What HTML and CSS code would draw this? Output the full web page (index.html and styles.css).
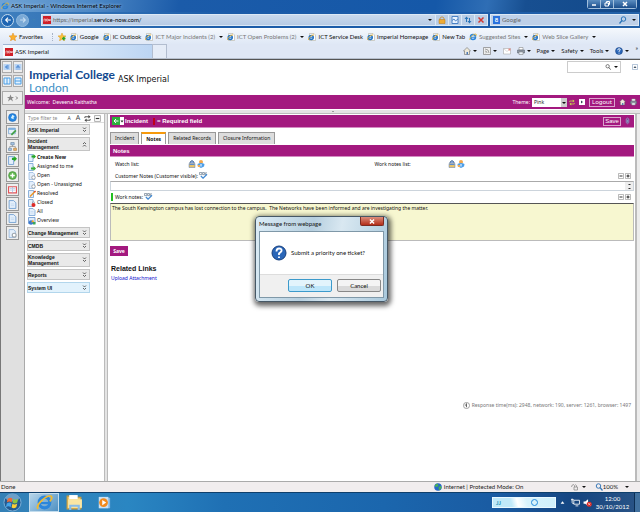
FILE: index.html
```html
<!DOCTYPE html>
<html lang="en">
<head>
<meta charset="utf-8">
<title>ASK Imperial</title>
<link rel="stylesheet" href="styles.css">
</head>
<body>
<svg class="sprite" aria-hidden="true">
  <symbol id="ie" viewBox="0 0 16 16"><circle cx="8" cy="8" r="5" fill="none" stroke="#2b86dc" stroke-width="3"/><path d="M4 8.5h9" stroke="#2b86dc" stroke-width="2"/><path d="M2 14C-1 11 9 1 14 2c2 1 0 4-1 5" fill="none" stroke="#f2b92c" stroke-width="1.6"/></symbol>
  <symbol id="iepage" viewBox="0 0 16 16"><path d="M3 1h9l3 3v11H3z" fill="#fff" stroke="#a9a590"/><circle cx="6.500" cy="9" r="4" fill="none" stroke="#2474c4" stroke-width="3"/><path d="M3 9.500h7" stroke="#2474c4" stroke-width="2"/><path d="M1 14C0 10 8 3 12 4" fill="none" stroke="#eeb02c" stroke-width="2"/></symbol>
  <symbol id="star" viewBox="0 0 16 16"><path d="M8 0l2.300 5.400 5.700.5-4.300 3.900 1.300 5.900L8 12.600 3 15.700l1.300-5.900L0 5.900l5.700-.5z" fill="#fbb02e" stroke="#dd8b1c"/></symbol>
  <symbol id="addstar" viewBox="0 0 16 16"><path d="M8 0l2.300 5.400 5.700.5-4.300 3.900 1.300 5.900L8 12.600 3 15.700l1.300-5.900L0 5.900l5.700-.5z" fill="#fbc03e" stroke="#dd9b1c"/><path d="M8 11h7M11.500 7.500v7" stroke="#2fa52d" stroke-width="3"/></symbol>
  <symbol id="now" viewBox="0 0 16 16"><path d="M0 0h16v16H0z" fill="#cf1f27"/><path d="M2 11V6h3v5M7 6h3v4H7zM11 6l1 4 1-3 1 3 1-4" fill="none" stroke="#fff"/></symbol>
  <symbol id="doc" viewBox="0 0 16 16"><path d="M2 1h8l4 4v10H2z" fill="#e4effb" stroke="#6b9bd0" stroke-width="1.500"/><path d="M5 7h6M5 10h6" stroke="#b4cfec"/></symbol>
  <symbol id="plusdoc" viewBox="0 0 16 16"><path d="M1 1h9v14H1z" fill="#e4effb" stroke="#6b9bd0" stroke-width="1.500"/><path d="M11 0l5 5-5 5V7H7V3h4z" fill="#24a626"/></symbol>
  <symbol id="assign" viewBox="0 0 16 16"><path d="M1 1h9v14H1z" fill="#e4effb" stroke="#6b9bd0" stroke-width="1.500"/><path d="M11 6l5 5-5 5v-3H6V9h5z" fill="#3bae3b"/></symbol>
  <symbol id="geardoc" viewBox="0 0 16 16"><path d="M2 1h8l3 3v11H2z" fill="#e4effb" stroke="#6b9bd0"/><circle cx="11" cy="11" r="3.500" fill="#fff" stroke="#9ca4ac" stroke-width="2"/></symbol>
  <symbol id="pendoc" viewBox="0 0 16 16"><path d="M1 1h10v14H1z" fill="#e4effb" stroke="#6b9bd0" stroke-width="1.500"/><path d="M4 13L14 3" stroke="#ec9325" stroke-width="3"/><path d="M13 4l2-2" stroke="#d63b27" stroke-width="3"/></symbol>
  <symbol id="lockdoc" viewBox="0 0 16 16"><path d="M1 1h9v14H1z" fill="#e4effb" stroke="#6b9bd0" stroke-width="1.500"/><path d="M9 9V6q2-3 4 0v3" fill="none" stroke="#888"/><circle cx="11" cy="12" r="4" fill="#df2b27"/></symbol>
  <symbol id="chart" viewBox="0 0 16 16"><path d="M1 1h13v12H1z" fill="#dcebfc" stroke="#5c8cca" stroke-width="1.500"/><circle cx="6" cy="11" r="4.500" fill="#3a78cf"/><path d="M6 11l4-6 2 5z" fill="#f5a623"/><path d="M10 10h5v5h-5z" fill="#3aa956"/></symbol>
  <symbol id="globe" viewBox="0 0 16 16"><circle cx="8" cy="8" r="7" fill="#2588e4" stroke="#1c63b5"/><path d="M8 3l4 3-2 1v4L5 9z" fill="#d5f1ff"/></symbol>
  <symbol id="earth" viewBox="0 0 16 16"><circle cx="8" cy="8" r="7.500" fill="#2768c9"/><path d="M2 4l5-3 2 4-3 3-4-1zM9 8l5-2 1 4-5 5z" fill="#48b352"/></symbol>
  <symbol id="edit" viewBox="0 0 16 16"><path d="M1 2h12v10H1z" fill="#e6f1fb" stroke="#4f8ac4"/><path d="M1 2h12v3H1z" fill="#74aadd"/><path d="M6 14l8-8" stroke="#43a147" stroke-width="3"/></symbol>
  <symbol id="tree" viewBox="0 0 16 16"><path d="M8 5v3M3 11V8h10v3" fill="none" stroke="#777"/><path d="M5 1h6v4H5zM1 11h5v4H1z" fill="#a9c8e8" stroke="#58799b"/><path d="M10 11h5v4h-5z" fill="#eeb36c" stroke="#a97835"/></symbol>
  <symbol id="add" viewBox="0 0 16 16"><circle cx="8" cy="8" r="7" fill="#64b752" stroke="#3e8b34"/><path d="M4 8h8M8 4v8" stroke="#fff" stroke-width="2.500"/></symbol>
  <symbol id="book" viewBox="0 0 16 16"><path d="M1 3h14v11H1z" fill="#fff" stroke="#e2555a" stroke-width="2"/><path d="M8 3v11M3 6h4M3 9h4M9 6h4M9 9h4" stroke="#89a8d4"/></symbol>
  <symbol id="lock" viewBox="0 0 16 16"><path d="M4 6V4q4-6 8 0v2" fill="#8aa9dc" stroke="#57779e" stroke-width="2"/><path d="M2 7h12v8H2z" fill="#e8c268" stroke="#5d7db2"/><path d="M3 8h10v2H3z" fill="#5d8dd2"/></symbol>
  <symbol id="padlock" viewBox="0 0 16 16"><path d="M4 7V4q4-5 8 0v3" fill="none" stroke="#c7974e" stroke-width="2"/><path d="M2 7h12v8H2z" fill="#efab35" stroke="#b97913"/></symbol>
  <symbol id="person" viewBox="0 0 16 16"><circle cx="8" cy="4" r="4" fill="#f3a74c"/><path d="M1 8q7-4 14 0l-1 5-6 3-6-3z" fill="#4c9ee8"/><path d="M8 8v5" stroke="#fff" stroke-width="2"/><path d="M1 10h5v4H2z" fill="#f0ab55"/></symbol>
  <symbol id="spell" viewBox="0 0 20 16"><path d="M1 1h5v5H1zM8 1h4v5H8zM18 2h-4v4h4" fill="none" stroke="#5e7286" stroke-width="1.500"/><path d="M4 9l5 5 9-9" fill="none" stroke="#448bd3" stroke-width="3"/></symbol>
  <symbol id="home" viewBox="0 0 16 16"><path d="M1 8l7-7 7 7h-2v7H3V8z" fill="#eee9d9" stroke="#555"/><path d="M7 10h3v5H7z" fill="#4c79b8"/></symbol>
  <symbol id="rss" viewBox="0 0 16 16"><path d="M1 1h14v14H1z" fill="#eee" stroke="#888" stroke-width="1.500"/><path d="M4 12h1M4 8q4 0 4 4M4 4q8 0 8 8" fill="none" stroke="#888" stroke-width="1.500"/></symbol>
  <symbol id="mail" viewBox="0 0 16 16"><path d="M1 3h14v11H1z" fill="#fff" stroke="#999"/><path d="M1 3l7 6 7-6" fill="none" stroke="#bbb"/><path d="M11 3h4v4h-4z" fill="#e78a82"/></symbol>
  <symbol id="print" viewBox="0 0 16 16"><path d="M4 1h8v5H4z" fill="#fff" stroke="#777"/><path d="M1 6h14v6H1z" fill="#8d97a3" stroke="#555f6b"/><path d="M4 10h8v5H4z" fill="#eaf2fa" stroke="#777"/></symbol>
  <symbol id="help" viewBox="0 0 16 16"><circle cx="8" cy="8" r="7" fill="#2a66b8" stroke="#173f7d"/><path d="M5.500 6.500q0-3 2.500-3 3 0 2.500 2.500Q10 7 8 8.500v1.500M8 11.500v1.500" fill="none" stroke="#fff" stroke-width="1.800"/></symbol>
  <symbol id="search" viewBox="0 0 16 16"><circle cx="7" cy="6" r="4.500" fill="none" stroke="currentColor" stroke-width="2"/><path d="M10 9l5 6" stroke="currentColor" stroke-width="2.500"/></symbol>
  <symbol id="searchl" viewBox="0 0 16 16"><circle cx="9" cy="6" r="4.500" fill="none" stroke="currentColor" stroke-width="2"/><path d="M6 9l-5 6" stroke="currentColor" stroke-width="2.500"/></symbol>
  <symbol id="refresh" viewBox="0 0 16 16"><path d="M2 7V4h9M14 9v3H5" fill="none" stroke="currentColor" stroke-width="2"/><path d="M10 0l5 4-5 4zM6 8l-5 4 5 4z" fill="currentColor"/></symbol>
  <symbol id="arrows" viewBox="0 0 16 16"><path d="M5 12V3M11 4v9" fill="none" stroke="currentColor" stroke-width="2"/><path d="M1 6l4-5 4 5zM7 10l4 5 4-5z" fill="currentColor"/></symbol>
  <symbol id="dbl" viewBox="0 0 10 12"><path d="M2 1l3 3 3-3M2 6l3 3 3-3" fill="none" stroke="#333" stroke-width="1.500"/></symbol>
  <symbol id="split" viewBox="0 0 16 16"><path d="M2 2h12v12H2zM8 2v12" fill="#e3f2ff" stroke="#4a9ee4" stroke-width="2"/></symbol>
  <symbol id="splith" viewBox="0 0 16 16"><path d="M2 2h12v12H2zM2 8h12" fill="#e3f2ff" stroke="#4a9ee4" stroke-width="2"/></symbol>
  <symbol id="paneleft" viewBox="0 0 16 16"><path d="M1 2h14v12H1z" fill="#b9d4f3"/><path d="M9 4L4 8l5 4zM11 4v8" fill="#5a92d6" stroke="#5a92d6"/></symbol>
  <symbol id="paneup" viewBox="0 0 16 16"><path d="M1 2h14v12H1z" fill="#b9d4f3"/><path d="M4 9l4-5 4 5zM4 12h8" fill="#5a92d6" stroke="#5a92d6"/></symbol>
  <symbol id="clip" viewBox="0 0 12 16"><path d="M3 3v9q3 5 6 0V3Q6-1 3 3M6 5v7" fill="none" stroke="#7fa3c8" stroke-width="2"/></symbol>
  <symbol id="minus" viewBox="0 0 12 12"><path d="M1 1h10v10H1z" fill="#fff" stroke="#777"/><path d="M3 6h6" stroke="#333" stroke-width="2"/></symbol>
  <symbol id="plus" viewBox="0 0 12 12"><path d="M1 1h10v10H1z" fill="#fff" stroke="#777"/><path d="M3 6h6M6 3v6" stroke="#222" stroke-width="2"/></symbol>
</svg>

<header class="chrome">
  <div class="titlebar">
    <svg class="i8"><use href="#ie"/></svg><span class="window-title">ASK Imperial - Windows Internet Explorer</span>
    <div class="winbtns"><button aria-label="Minimise"><svg viewBox="0 0 16 12"><path d="M4 8h8" stroke="#fff" stroke-width="3"/></svg></button><button aria-label="Restore"><svg viewBox="0 0 16 12"><path d="M4 4h7v6H4zM7 4V1h6v6h-2" fill="none" stroke="#fff" stroke-width="2"/></svg></button><button class="wide" aria-label="Close"><svg viewBox="0 0 16 12"><path d="M4 2l8 8M12 2l-8 8" stroke="#fff" stroke-width="3"/></svg></button></div>
  </div>
  <div class="navrow">
    <button class="nav back" aria-label="Back"><svg viewBox="0 0 14 14"><path d="M12 7H3M7 3L3 7l4 4" fill="none" stroke="#fff" stroke-width="2"/></svg></button>
    <button class="nav fwd" aria-label="Forward"><svg viewBox="0 0 14 14"><path d="M2 7h9M7 3l4 4-4 4" fill="none" stroke="#c5ddf2" stroke-width="2"/></svg></button>
    <span class="caret pale"></span>
    <label class="address"><svg class="i8"><use href="#now"/></svg><span class="url"><span>https://imperial.</span>service-now.com/</span><span class="caret"></span></label>
    <div class="navbtns"><button aria-label="Security report"><svg><use href="#padlock"/></svg></button><button aria-label="Compatibility view"><svg viewBox="0 0 16 16"><path d="M2 1h12v14H2z" fill="#e9f3ff" stroke="#4a82c6" stroke-width="2"/><path d="M2 9l4-3 3 4 5-4" fill="none" stroke="#4a82c6" stroke-width="2"/></svg></button><button class="blue" aria-label="Refresh"><svg><use href="#arrows"/></svg></button><button aria-label="Stop"><svg viewBox="0 0 16 16"><path d="M3 3l10 10M13 3L3 13" stroke="#d33a32" stroke-width="3"/></svg></button></div>
    <label class="websearch"><span class="g">8</span><input type="text" placeholder="Google" aria-label="Web search"><svg class="blue"><use href="#searchl"/></svg><span class="caret"></span></label>
  </div>
  <nav class="favbar">
    <a href="#" class="fav-first"><svg><use href="#star"/></svg>Favorites</a>
    <a href="#"><svg><use href="#addstar"/></svg></a>
    <a href="#"><svg><use href="#iepage"/></svg>Google</a>
    <a href="#"><svg><use href="#iepage"/></svg>IC Outlook</a>
    <a href="#" class="dim"><svg><use href="#iepage"/></svg>ICT Major Incidents (2)<span class="caret"></span></a>
    <a href="#" class="dim"><svg><use href="#iepage"/></svg>ICT Open Problems (2)<span class="caret"></span></a>
    <a href="#"><svg><use href="#iepage"/></svg>ICT Service Desk</a>
    <a href="#"><svg><use href="#iepage"/></svg>Imperial Homepage</a>
    <a href="#"><svg><use href="#iepage"/></svg>New Tab</a>
    <a href="#" class="dim"><svg><use href="#ie"/></svg>Suggested Sites<span class="caret"></span></a>
    <a href="#" class="dim"><svg><use href="#iepage"/></svg>Web Slice Gallery<span class="caret"></span></a>
  </nav>
  <div class="tabrow">
    <button class="btab"><svg><use href="#now"/></svg>ASK Imperial</button><button class="newtab" aria-label="New tab"></button>
    <div class="cmd">
      <button aria-label="Home"><svg><use href="#home"/></svg><span class="caret"></span></button><button aria-label="Feeds"><svg><use href="#rss"/></svg><span class="caret"></span></button><button aria-label="Read mail"><svg><use href="#mail"/></svg></button><button aria-label="Print"><svg><use href="#print"/></svg><span class="caret"></span></button><button>Page<span class="caret"></span></button><button>Safety<span class="caret"></span></button><button>Tools<span class="caret"></span></button><button aria-label="Help"><svg><use href="#help"/></svg><span class="caret"></span></button><span class="more">»</span>
    </div>
  </div>
</header>

<div class="viewport">
  <aside class="edge">
    <div class="layouts"><button aria-label="Collapse left"><svg><use href="#paneleft"/></svg></button><button aria-label="Collapse top"><svg><use href="#paneup"/></svg></button><button aria-label="Split vertical"><svg><use href="#split"/></svg></button><button aria-label="Split horizontal"><svg><use href="#splith"/></svg></button></div>
    <button class="bookmark" aria-label="Bookmarks"><svg viewBox="0 0 24 16"><path d="M8 1l2 5h5l-4 3 2 6-5-4-5 4 2-6-4-3h5z" fill="#888"/><path d="M19 5l3 3-3 3" fill="none" stroke="#777" stroke-width="2"/></svg></button>
    <div class="shortcuts">
      <button aria-label="Web"><svg><use href="#globe"/></svg></button><button aria-label="Edit"><svg><use href="#edit"/></svg></button><button aria-label="Map"><svg><use href="#tree"/></svg></button><button aria-label="Create"><svg><use href="#plusdoc"/></svg></button><button aria-label="Add"><svg><use href="#add"/></svg></button><button aria-label="Knowledge"><svg><use href="#book"/></svg></button><button aria-label="Record"><svg><use href="#doc"/></svg></button><button aria-label="Record list"><svg><use href="#doc"/></svg></button><button aria-label="Settings record"><svg><use href="#geardoc"/></svg></button>
    </div>
  </aside>
  <div class="page">
    <div class="banner">
      <div class="logo"><b>Imperial College</b><span>London</span></div>
      <h1>ASK Imperial</h1>
      <label class="sitesearch"><input type="text" aria-label="Search site"><svg><use href="#search"/></svg><span class="caret"></span></label>
      <button class="toggle" aria-label="Toggle banner"><svg viewBox="0 0 12 12"><path d="M1 1h10v10H1z" fill="#fff" stroke="#6f8fb4"/><path d="M6 4l3 4H3z" fill="#456"/></svg></button>
    </div>
    <div class="welcome">
      <span>Welcome:&nbsp; Deveena Raithatha</span>
      <label class="theme">Theme: <select><option>Pink</option></select></label>
      <svg class="swap"><use href="#refresh"/></svg>
      <svg class="i6" viewBox="0 0 12 12"><path d="M0 0h12v12H0z" fill="#fff"/><path d="M4 3l4 3-4 3z" fill="#345"/></svg>
      <button class="outline logout">Logout</button>
      <svg class="i8"><use href="#home"/></svg><svg class="i8"><use href="#print"/></svg>
    </div>
    <div class="hsplit"><span></span></div>
    <div class="cols">
      <nav class="navigator">
        <div class="filter"><input type="text" placeholder="Type filter te" aria-label="Filter"><span class="sa">A</span><span class="la">A</span><svg><use href="#refresh"/></svg><svg><use href="#minus"/></svg></div>
        <button class="app">ASK Imperial<svg><use href="#dbl"/></svg></button>
        <button class="app">Incident<br>Management<svg class="up"><use href="#dbl"/></svg></button>
        <ul>
          <li><a href="#"><svg><use href="#plusdoc"/></svg><b>Create New</b></a></li>
          <li><a href="#"><svg><use href="#assign"/></svg>Assigned to me</a></li>
          <li><a href="#"><svg><use href="#geardoc"/></svg>Open</a></li>
          <li><a href="#"><svg><use href="#geardoc"/></svg>Open - Unassigned</a></li>
          <li><a href="#"><svg><use href="#pendoc"/></svg>Resolved</a></li>
          <li><a href="#"><svg><use href="#lockdoc"/></svg>Closed</a></li>
          <li><a href="#"><svg><use href="#doc"/></svg>All</a></li>
          <li><a href="#"><svg><use href="#chart"/></svg>Overview</a></li>
        </ul>
        <button class="app">Change Management<svg><use href="#dbl"/></svg></button>
        <button class="app">CMDB<svg><use href="#dbl"/></svg></button>
        <button class="app">Knowledge<br>Management<svg><use href="#dbl"/></svg></button>
        <button class="app">Reports<svg><use href="#dbl"/></svg></button>
        <button class="app hot">System UI<svg><use href="#dbl"/></svg></button>
      </nav>
      <div class="vsplit"></div>
      <main>
        <div class="bar formbar"><button class="goback" aria-label="Back"><svg viewBox="0 0 24 16"><path d="M0 0h16v16H0z" fill="#2bb03b"/><path d="M16 0h8v16h-8z" fill="#fff"/><path d="M13 8H5M8 4L4 8l4 4" fill="none" stroke="#fff" stroke-width="2"/><path d="M17 7h6l-3 4z" fill="#222"/></svg></button><b>Incident</b><span class="req"></span><b>= Required field</b><button class="outline save-top">Save</button><svg class="clip"><use href="#clip"/></svg></div>
        <div class="tabs"><button>Incident</button><button class="on">Notes</button><button>Related Records</button><button>Closure Information</button></div>
        <div class="bar sect"><b>Notes</b></div>
        <div class="lists"><div><span>Watch list:</span><svg><use href="#lock"/></svg><svg><use href="#person"/></svg></div><div><span>Work notes list:</span><svg><use href="#lock"/></svg><svg><use href="#person"/></svg></div></div>
        <div class="field cust"><label for="cn">Customer Notes (Customer visible):</label><svg class="sp"><use href="#spell"/></svg><svg class="pm"><use href="#minus"/></svg><svg class="pm"><use href="#plus"/></svg></div>
        <div class="notebox"><textarea id="cn" rows="1"></textarea><span class="spin"><i></i><i></i></span></div>
        <div class="field work"><label for="wn">Work notes:</label><svg class="sp"><use href="#spell"/></svg><svg class="pm"><use href="#minus"/></svg><svg class="pm"><use href="#plus"/></svg></div>
        <textarea id="wn" class="worknotes">The South Kensington campus has lost connection to the campus.  The Networks have been informed and are investigating the matter.</textarea>
        <button class="save">Save</button>
        <h2>Related Links</h2>
        <a class="upload" href="#">Upload Attachment</a>
        <p class="resp"><svg viewBox="0 0 16 16"><circle cx="8" cy="8" r="7" fill="none" stroke="#777" stroke-width="1.500"/><path d="M8 3v9M4 7h4" stroke="#555" stroke-width="2"/></svg>Response time(ms): 2948, network: 190, server: 1261, browser: 1497</p>
      </main>
      <div class="rail"></div>
    </div>
  </div>
</div>

<footer class="status"><span>Done</span><div class="zone"><svg><use href="#earth"/></svg>Internet | Protected Mode: On</div><svg class="prot" viewBox="0 0 16 16"><path d="M2 8q0-5 5-5M7 8h7v6H7zM8 8V5q2-3 4 0v3" fill="none" stroke="#888" stroke-width="1.500"/></svg><span class="caret"></span><div class="zoom"><svg><use href="#search"/></svg>100%<span class="caret"></span></div></footer>

<div class="taskbar">
  <button class="start" aria-label="Start"><svg viewBox="0 0 20 20"><circle cx="10" cy="10" r="9" fill="#235a91" stroke="#7fb2d8"/><ellipse cx="10" cy="5" rx="7" ry="4" fill="#6c9fc9"/><path d="M5 6q3-2 5 0L9 10q-2-2-5 0z" fill="#ee6a35"/><path d="M11 6q2 2 5 0l-1 4q-3 2-5 0z" fill="#8cc63f"/><path d="M4 11q3-2 5 0l-1 4q-2-2-5 0z" fill="#45a4e8"/><path d="M10 11q2 2 5 0l-1 4q-3 2-5 0z" fill="#fbce35"/></svg></button>
  <button class="task active" aria-label="Internet Explorer"><svg><use href="#ie"/></svg></button>
  <button class="task" aria-label="Explorer"><svg viewBox="0 0 16 16"><path d="M1 2h5l1 1h7v11H1z" fill="#f0cc72" stroke="#c99b3b"/><path d="M3 1h8v4H3z" fill="#fff"/><path d="M2 5h13v8H2z" fill="#fae6a4"/><path d="M4 15v-4h8v4" fill="none" stroke="#87bce9" stroke-width="2"/></svg></button>
  <button class="task" aria-label="Media player"><svg class="wmp" viewBox="0 0 16 16"><path d="M3 2h12v12H3z" fill="#82b6e3"/><path d="M2 1h11v13H2z" fill="#c9e1f5"/><circle cx="7.500" cy="7.500" r="5" fill="#f28a1e"/><path d="M6 4.500l4.500 3L6 10.500z" fill="#fff"/></svg></button>
  <div class="widget"><span>JJ</span><i></i></div>
  <svg class="upt" viewBox="0 0 8 8"><path d="M1 6l3-4 3 4z" fill="#fff"/></svg>
  <svg class="tray" viewBox="0 0 16 16"><path d="M5 4h10v7H5zM8 14h5M2 1v7q0 2 3 2M0 3h5" fill="none" stroke="#fff" stroke-width="1.500"/></svg>
  <svg class="tray" viewBox="0 0 16 16"><path d="M1 6h3l5-4v12l-5-4H1z" fill="#fff"/><circle cx="11" cy="11" r="4.500" fill="#dc2a25"/><path d="M9 9l4 4M13 9l-4 4" stroke="#fff"/></svg>
  <time>12:00<br>30/10/2012</time>
  <button class="peek" aria-label="Show desktop"></button>
</div>

<div class="dialog" role="dialog" aria-labelledby="dlg">
  <div class="dtitle"><span id="dlg">Message from webpage</span><button class="dclose" aria-label="Close"><svg viewBox="0 0 24 10"><path d="M9 2l6 6M15 2L9 8" stroke="#fff" stroke-width="2"/></svg></button></div>
  <div class="dbody"><div class="dmsg"><svg><use href="#help"/></svg>Submit a priority one ticket?</div><div class="dbtns"><button class="ok">OK</button><button>Cancel</button></div></div>
</div>
</body>
</html>
```
FILE: styles.css
```css
* { box-sizing: border-box; margin: 0; padding: 0; }
html { height: 100%; }
body { min-height: 100%; display: flex; flex-direction: column; position: relative; overflow: hidden; font: 5px/8px "Noto Sans", "Liberation Sans", sans-serif; color: #111; background: #fff; }
button, input, select, textarea { font: inherit; color: inherit; background: none; border: 0; border-radius: 0; outline: 0; }
a { color: inherit; text-decoration: none; }
svg { display: block; flex: none; width: 8px; height: 8px; }
.sprite { position: absolute; width: 0; height: 0; }
ul { list-style: none; }
.i6 { width: 6px; height: 6px; }
.blue { color: #2874b8; }
.caret { flex: none; display: inline-block; border: 2px solid transparent; border-top-color: #111; border-bottom: 0; margin-left: 3px; vertical-align: middle; }
.caret.pale { border-top-color: #3d7fb5; }

.chrome, .status, .taskbar, .dialog { font: 6px/8px Lato, "Noto Sans", sans-serif; }
.chrome { background: #dfe7f5; border-bottom: 1px solid #555; }
.titlebar { height: 12px; display: flex; align-items: center; gap: 2px; padding-left: 1px; background: linear-gradient(100deg, #6fa3d4 0, #4f8ac7 14%, #1b5ba9 28%, #1558a8 68%, #2f6eb5 76%, #174f91 82%, #12498a); }
.window-title { color: #000; text-shadow: 0 0 3px #c3def5; }
.winbtns { display: flex; align-self: flex-start; margin-left: auto; margin-right: 3px; border: 1px solid #a2bfdc; border-top: 0; border-radius: 0 0 3px 3px; }
.winbtns button { width: 13px; height: 8px; background: linear-gradient(#5c8ec1, #1b4e8c); border-right: 1px solid #a2bfdc; }
.winbtns button:last-child { border-right: 0; }
.winbtns .wide { width: 22px; }
.winbtns svg { margin: auto; }
.navrow { height: 16px; display: flex; align-items: center; padding: 0 1px; background: linear-gradient(90deg, #3f7fbe, #1c5ca8 35%, #1b5ba9 70%, #2361a7); }
.nav { border-radius: 50%; border: 1px solid #c5dcf0; background: #1f66b3; width: 13px; height: 13px; }
.nav svg { margin: auto; }
.fwd { background: #7aa9d6; border-color: #8fb9df; margin-left: 2px; }
.address { flex: 1; height: 12px; margin-left: 5px; padding: 0 3px 0 1px; display: flex; align-items: center; gap: 2px; background: linear-gradient(#c9d9ed, #b7cbe5); border: 1px solid #dce9f6; }
.url { flex: 1; color: #000; }
.url span { color: #666; }
.navbtns { display: flex; height: 12px; }
.navbtns button { width: 13px; border: 1px solid #dce9f6; border-left: 0; background: #b9cde6; }
.navbtns svg { margin: auto; }
.websearch { width: 149px; height: 12px; margin-left: 2px; padding: 0 2px; display: flex; align-items: center; gap: 2px; background: #bed0e8; border: 1px solid #dce9f6; }
.websearch input { flex: 1; min-width: 0; }
.websearch input::placeholder { color: #666; }
.g { width: 7px; height: 8px; background: #2a72dd; color: #fff; text-align: center; font-weight: bold; }
.favbar { height: 16px; display: flex; align-items: center; gap: 4px; padding-left: 9px; white-space: nowrap; background: linear-gradient(#f3f7fc, #dfe8f6); border-top: 1px solid #f8fbfe; }
.favbar a { display: flex; align-items: center; gap: 2px; }
.favbar .fav-first { padding-right: 9px; margin-right: 1px; border-right: 1px dotted #a7b3c6; }
.favbar .dim { color: #777; }
.favbar .caret { margin-left: 2px; }
.tabrow { height: 15px; display: flex; align-items: stretch; padding-left: 3px; background: #dfe7f5; border-bottom: 1px solid #b6bfcd; }
.btab { width: 149px; display: flex; align-items: center; gap: 2px; padding-left: 2px; background: linear-gradient(90deg, #f4f9fe, #bcd5f3); border-top: 1px solid #9fb6d4; }
.newtab { width: 15px; border: 1px solid #b2bdcf; border-bottom: 0; background: #e5ecf7; }
.cmd { margin-left: auto; display: flex; align-items: center; gap: 6px; padding-right: 2px; color: #222; }
.cmd button { display: flex; align-items: center; }
.cmd .caret { margin-left: 2px; }
.more { align-self: flex-start; }

.viewport { flex: 1; display: flex; min-height: 0; }
.edge { width: 25px; flex: none; background: #e0e0e0; border-left: 1px solid #777; border-right: 1px solid #aaa; padding: 1px 1px 0; }
.layouts { display: grid; grid-template-columns: 10px 10px; gap: 2px 1px; }
.edge button { border: 1px solid #aaa; background: #eee; }
.layouts button { height: 12px; }
.layouts svg, .bookmark svg { margin: auto; }
.bookmark { width: 21px; height: 14px; margin-top: 4px; }
.bookmark svg { width: 15px; }
.shortcuts { display: grid; gap: 1px; width: 13px; margin: 4px 0 0 4px; }
.shortcuts button { height: 14px; width: 13px; border-color: #999; }
.shortcuts button:nth-child(even) { height: 13px; }
.shortcuts svg { width: 9px; height: 9px; margin: auto; }
.page { flex: 1; min-width: 0; display: flex; flex-direction: column; }
.banner { height: 35px; display: flex; align-items: flex-start; padding-left: 4px; }
.logo { color: #12498f; font: 12px/13px Lato, "Open Sans", sans-serif; padding-top: 8px; }
.logo b, .logo span { display: block; }
.logo span { color: #3d8fc6; line-height: 14px; }
h1 { font: 8px/10px "DejaVu Sans", sans-serif; margin: 15px 0 0 3px; }
.sitesearch { margin: 1px 11px 0 auto; width: 54px; height: 12px; display: flex; align-items: center; border: 1px solid #ccc; padding-right: 2px; color: #555; }
.sitesearch input { flex: 1; min-width: 0; }
.sitesearch svg { width: 6px; height: 6px; }
.toggle { margin: 4px 2px 0 0; }
.toggle svg { width: 6px; height: 6px; }
.welcome { height: 14px; display: flex; align-items: center; gap: 4px; padding: 0 3px 0 2px; background: #a3197f; color: #fff; }
.theme { position: relative; margin-left: auto; display: flex; align-items: center; gap: 2px; }
.theme select { appearance: none; width: 35px; height: 9px; padding-left: 2px; background: #fff linear-gradient(#ccc, #ccc) right / 6px 9px no-repeat; color: #222; }
.theme::after { content: ""; position: absolute; right: 1px; top: 4px; border: 2px solid transparent; border-top-color: #111; border-bottom: 0; }
.welcome .swap { width: 6px; height: 7px; color: #c8dc4a; margin-left: -2px; }
.outline { border: 1px solid #dba3cd; color: #fff; line-height: 7px; }
.logout { width: 26px; height: 9px; font-size: 6px; }
.welcome .i8 { width: 7px; }
.hsplit { height: 5px; background: #e4e4e4; border-top: 1px solid #fff; border-bottom: 1px solid #bbb; display: flex; justify-content: center; }
.hsplit span { border: 1px solid transparent; border-bottom-color: #555; border-top: 0; height: 1px; margin-top: 1px; }
.cols { flex: 1; display: flex; }
.navigator { width: 79px; flex: none; padding-left: 2px; }
.filter { height: 9px; display: flex; align-items: center; gap: 3px; color: #444; border-bottom: 1px solid #ddd; margin-bottom: 1px; }
.filter input { width: 36px; padding-left: 1px; }
.filter input::placeholder { color: #888; }
.filter svg { width: 7px; height: 7px; }
.sa, .la { width: 6px; text-align: center; }
.la { font-size: 7px; }
.app { width: 63px; min-height: 11px; display: block; position: relative; margin-bottom: 2px; border: 1px solid #c4c4c4; background: #e9e9e9; text-align: left; font: bold 5px/6px "Liberation Sans", sans-serif; white-space: nowrap; }
.app svg { position: absolute; right: 2px; top: calc(50% - 3px); width: 5px; height: 6px; }
.app .up { transform: rotate(180deg); }
.app.hot { background: #e2f2fc; border-color: #b2d6ec; }
.navigator li { height: 9px; }
.navigator li a { display: flex; gap: 1px; padding-left: 1px; align-items: center; line-height: 9px; white-space: nowrap; }
.navigator ul { margin-bottom: 2px; }
.vsplit { width: 4px; flex: none; background: #e4e4e4; border: 1px solid #bbb; border-width: 0 1px; margin-right: 2px; }
.rail { width: 5px; flex: none; margin-left: 1px; background: #ececec; border-left: 2px solid #bbb; }
main { flex: 1; min-width: 0; padding: 1px 0 0; position: relative; }
.bar { display: flex; align-items: center; background: #a3197f; color: #fff; border-bottom: 1px solid #d48cc3; font: 6px/8px "Liberation Sans", sans-serif; }
.formbar { height: 13px; padding: 0 4px 0 2px; }
.goback { margin-right: 1px; }
.goback svg { width: 12px; height: 8px; }
.req { width: 2px; height: 7px; background: #c00019; margin: 0 2px 0 5px; }
.outline.save-top { width: 18px; height: 9px; margin-left: auto; }
.clip { margin-left: 4px; width: 5px; }
.tabs { display: flex; gap: 2px; padding-top: 4px; height: 16px; }
.tabs button { padding: 0 4px; border: 1px solid #999; border-bottom: 0; background: #ddd; line-height: 9px; }
.tabs .on { background: #fff; border-top: 2px solid #f79a0c; font-weight: bold; }
.sect { height: 12px; padding-left: 3px; margin-top: 1px; }
.lists { display: grid; grid-template-columns: 1fr 1fr; height: 13px; padding: 0 0 0 5px; }
.lists div { display: flex; gap: 1px; align-items: center; }
.lists span { width: 72px; }
.field { display: flex; gap: 1px; align-items: center; height: 11px; padding: 0 3px 0 5px; }
.sp { width: 9px; height: 7px; margin-right: auto; }
.pm { width: 6px; height: 6px; }
.notebox { display: flex; height: 10px; border: 1px solid #ccd4dc; border-top-color: #aaa; }
.notebox textarea { flex: 1; resize: none; }
.spin { width: 8px; background: #eee; display: grid; place-items: center; }
.spin i { border: 1px solid transparent; border-bottom-color: #333; border-top: 0; width: 3px; }
.work { padding-left: 1px; }
.work label { border-left: 2px solid #22c022; padding-left: 2px; }
.worknotes { display: block; width: 100%; height: 38px; margin-top: 1px; padding: 1px; background: #f7f7d0; border: 1px solid #bbb; border-top-color: #555; resize: none; line-height: 6px; overflow: hidden; }
.save { display: block; margin-top: 5px; width: 18px; height: 10px; background: #a3197f; color: #fff; font-weight: bold; }
h2 { font: bold 7px/8px "Liberation Sans", sans-serif; margin: 9px 0 1px 1px; }
.upload { display: block; margin-left: 1px; color: #11c; }
.resp { display: flex; justify-content: flex-end; align-items: center; gap: 2px; color: #777; margin: 119px 3px 0 0; }
.resp svg { width: 7px; height: 7px; }

.status { height: 11px; display: flex; align-items: center; padding: 0 4px 0 1px; background: #f1edee; border-top: 1px solid #aaa; color: #222; }
.zone { width: 136px; margin-left: auto; display: flex; align-items: center; gap: 2px; }
.prot { width: 9px; }
.zoom { display: flex; align-items: center; margin-left: 9px; color: #222; }
.zoom svg { color: #3a7ab8; }
.zoom .caret { margin: 0 7px 0 7px; }
.taskbar { height: 20px; display: flex; align-items: center; padding-left: 3px; color: #fff; background: linear-gradient(90deg, #3480b6, #2a86c2 20%, #1f70b4 35%, #1b66ad 60%, #1a5ba2 78%, #154580 90%, #2a5486); border-top: 1px solid #0f3f6b; }
.start svg { width: 19px; height: 19px; }
.task { width: 30px; height: 19px; border: 1px solid transparent; }
.task svg { width: 17px; height: 17px; margin: auto; }
.task .wmp { width: 14px; height: 14px; }
.start + .task { margin-left: 7px; }
.task.active { background: linear-gradient(135deg, #b5d4e9, #4f91c3); border-color: #c2dced; }
.widget { margin-left: auto; width: 64px; height: 11px; display: flex; align-items: center; background: linear-gradient(75deg, #c0e9f9 30%, #fff 40%, #d8f3fc 55%, #d0f0fb); color: #39b; border: 1px solid #eaf9ff; padding-left: 3px; font-weight: bold; }
.widget i { width: 7px; height: 7px; border: 1px solid #2389dc; border-radius: 50%; margin-left: 30px; }
.upt { width: 5px; height: 5px; margin: 0 6px 0 4px; }
.tray { width: 9px; height: 9px; margin-right: 3px; }
.taskbar time { width: 35px; text-align: center; line-height: 8px; margin-right: 4px; }
.peek { align-self: stretch; width: 6px; border-left: 1px solid #0c2f55; background: #41719f; }

.dialog { position: absolute; left: calc(50% - 65px); top: 216px; width: 133px; padding: 0 3px 3px; background: linear-gradient(100deg, #dcecf6, #b6cfdf 40%, #d9e8f1 60%, #a8c8dc); border: 1px solid #465866; border-radius: 4px; box-shadow: 1px 2px 5px 2px #0009; color: #111; }
.dtitle { height: 14px; display: flex; align-items: center; }
.dtitle span { flex: 1; }
.dclose { align-self: flex-start; width: 24px; height: 9px; background: linear-gradient(#dc8d7c, #b32d18); border: 1px solid #7b2a20; border-top: 0; border-radius: 0 0 2px 2px; }
.dclose svg { margin: auto; width: 22px; height: 7px; }
.dbody { background: #fff; border: 1px solid #7f98a8; }
.dmsg { height: 42px; display: flex; align-items: center; gap: 4px; padding-left: 11px; }
.dmsg svg { width: 16px; height: 16px; }
.dbtns { height: 23px; display: flex; justify-content: flex-end; gap: 5px; padding: 4px 2px 0 0; background: #f0f0f0; border-top: 1px solid #ddd; }
.dbtns button { width: 44px; height: 13px; border: 1px solid #888; border-radius: 2px; background: linear-gradient(#f4f4f4 50%, #dadada 50%); }
.dbtns .ok { border-color: #3c9acb; background: linear-gradient(#e3f4fc 50%, #bee6fa 50%); }
```
